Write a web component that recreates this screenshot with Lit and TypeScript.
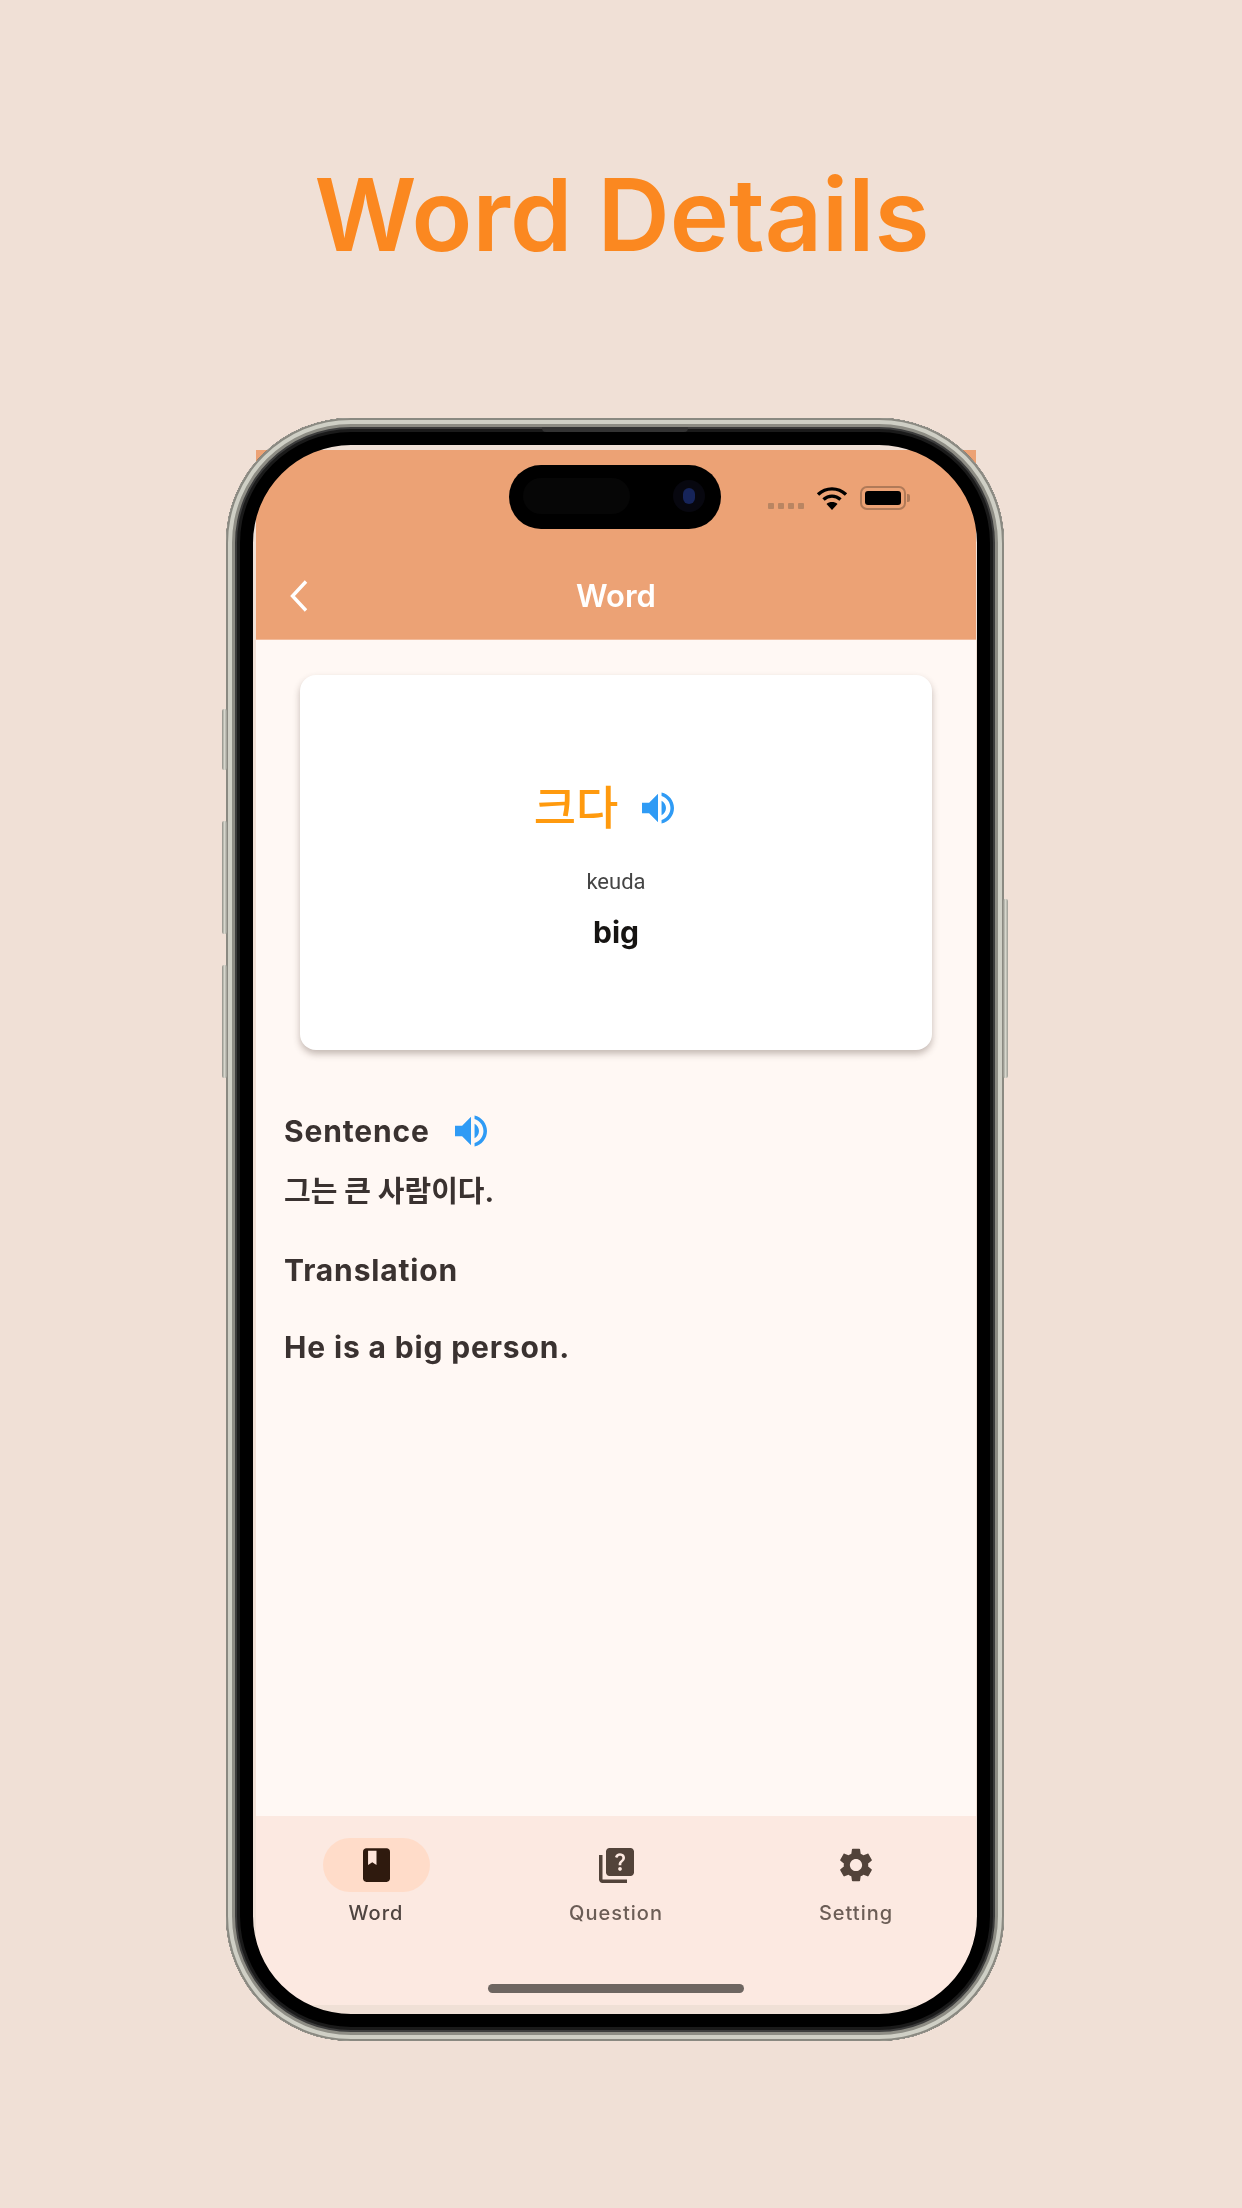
import { LitElement, html, css, svg } from 'lit';
import { customElement, property } from 'lit/decorators.js';

const speaker = svg`<path d="M3 9v6h4l5 5V4L7 9H3zm13.5 3c0-1.77-1.02-3.29-2.5-4.03v8.05c1.48-.73 2.5-2.25 2.5-4.02zM14 3.23v2.06c2.89.86 5 3.54 5 6.71s-2.11 5.85-5 6.71v2.06c4.01-.91 7-4.49 7-8.77s-2.99-7.86-7-8.77z"/>`;

const book = svg`<path d="M18 2H6c-1.1 0-2 .9-2 2v16c0 1.1.9 2 2 2h12c1.1 0 2-.9 2-2V4c0-1.1-.9-2-2-2z"/><path d="M7 3.5h5v8.5l-2.5-1.6L7 12z" fill="#ffe6da"/>`;

const quiz = svg`<path d="M4 6H2v14c0 1.1.9 2 2 2h14v-2H4V6zm16-4H8c-1.1 0-2 .9-2 2v12c0 1.1.9 2 2 2h12c1.1 0 2-.9 2-2V4c0-1.1-.9-2-2-2zm-5.99 13c-.59 0-1.05-.47-1.05-1.05 0-.59.47-1.04 1.05-1.04.59 0 1.04.45 1.04 1.04-.01.58-.45 1.05-1.04 1.05zm2.5-6.17c-.63.93-1.23 1.21-1.56 1.81-.13.24-.18.4-.18 1.18h-1.52c0-.41-.06-1.08.26-1.65.41-.73 1.18-1.16 1.63-1.8.48-.68.21-1.94-1.14-1.94-.88 0-1.32.67-1.5 1.23l-1.37-.57C11.51 5.96 12.52 5 13.99 5c1.23 0 2.08.56 2.51 1.26.37.61.58 1.73.01 2.57z"/>`;

const gear = svg`<path d="M19.14 12.94c.04-.3.06-.61.06-.94 0-.32-.02-.64-.07-.94l2.03-1.58c.18-.14.23-.41.12-.61l-1.92-3.32c-.12-.22-.37-.29-.59-.22l-2.39.96c-.5-.38-1.03-.7-1.62-.94l-.36-2.54c-.04-.24-.24-.41-.48-.41h-3.84c-.24 0-.43.17-.47.41l-.36 2.54c-.59.24-1.13.57-1.62.94l-2.39-.96c-.22-.08-.47 0-.59.22L2.74 8.87c-.12.21-.08.47.12.61l2.03 1.58c-.05.3-.09.63-.09.94s.02.64.07.94l-2.03 1.58c-.18.14-.23.41-.12.61l1.92 3.32c.12.22.37.29.59.22l2.39-.96c.5.38 1.03.7 1.62.94l.36 2.54c.05.24.24.41.48.41h3.84c.24 0 .44-.17.47-.41l.36-2.54c.59-.24 1.13-.56 1.62-.94l2.39.96c.22.08.47 0 .59-.22l1.92-3.32c.12-.22.07-.47-.12-.61l-2.01-1.58zM12 15.6c-1.98 0-3.6-1.62-3.6-3.6s1.62-3.6 3.6-3.6 3.6 1.62 3.6 3.6-1.62 3.6-3.6 3.6z"/>`;

@customElement('nav-tab')
export class NavTab extends LitElement {
  @property({ type: String }) label: string = '';
  @property({ type: Boolean }) active: boolean = false;

  static get styles() {
    return css`
      :host {
        display: flex;
        flex-direction: column;
        align-items: center;
      }

      .pill {
        display: flex;
        align-items: center;
        justify-content: center;
        width: 107px;
        height: 54px;
        border-radius: 27px;
        color: #52433a;
      }

      :host([active]) .pill {
        background: #ffdcc9;
        color: #2f1a0e;
      }

      .label {
        margin-top: 7px;
        font: 500 20px/28px Inter, sans-serif;
        letter-spacing: 1px;
        color: #6b5d56;
      }

      :host([active]) .label {
        color: #4f4440;
      }
    `;
  }

  render() {
    return html`
      <div class="pill"><slot></slot></div>
      <div class="label">${this.label}</div>
    `;
  }
}

@customElement('app-root')
export class AppRoot extends LitElement {
  static get styles() {
    return css`
      :host {
        display: block;
        width: 1242px;
        height: 2208px;
        overflow: hidden;
        background: #f0e0d6;
        font-family: Inter, 'Noto Sans CJK KR', sans-serif;
      }

      h1 {
        margin: 0;
        padding: 165px 0 0 2px;
        text-align: center;
        font: 600 100px/100px Inter, sans-serif;
        color: #fb8820;
      }

      .phone {
        position: relative;
        box-sizing: border-box;
        width: 778px;
        height: 1623px;
        margin: 153px 0 0 226px;
        padding: 32px 28px 36px 30px;
      }

      /* frame sits over the screen, the top corners of the header poke out of it */
      .bezel {
        position: absolute;
        inset: 0;
        border-radius: 125px;
        pointer-events: none;
        box-shadow:
          inset 0 0 0 2px #8a8981,
          inset 0 0 0 6px #cfcfc5,
          inset 0 0 0 9px #8d8c84,
          inset 0 0 0 11px #3c3c3c,
          inset 0 0 0 14px #1a1a1a,
          inset 0 0 0 27px #000;
      }

      .btn {
        position: absolute;
        width: 5px;
        border-radius: 2px;
        background: linear-gradient(90deg, #8f8e86, #d6d6cc 50%, #9b9a92);
      }

      .slit {
        position: absolute;
        left: 316px;
        top: 9px;
        width: 146px;
        height: 5px;
        border-radius: 0 0 4px 4px;
        background: #333;
      }

      .island {
        position: absolute;
        left: 283px;
        top: 47px;
        width: 212px;
        height: 64px;
        border-radius: 32px;
        background: #000;
      }

      .island .sensor {
        position: absolute;
        left: 14px;
        top: 13px;
        width: 107px;
        height: 36px;
        border-radius: 18px;
        background: #060606;
      }

      .island .lens {
        position: absolute;
        left: 164px;
        top: 15px;
        width: 32px;
        height: 32px;
        border-radius: 50%;
        background: #07070f;
      }

      .island .lens::after {
        content: '';
        position: absolute;
        left: 10px;
        top: 8px;
        width: 12px;
        height: 16px;
        border-radius: 6px;
        background: #16245a;
      }

      .screen {
        display: flex;
        flex-direction: column;
        height: 1555px;
        background: #fff8f4;
        border-radius: 0 0 40px 40px;
        overflow: hidden;
        filter: blur(0.6px);
      }

      .appbar {
        box-sizing: border-box;
        height: 190px;
        background: #eca275;
        border-bottom: 1px solid #f2bb9b;
      }

      .status {
        display: flex;
        align-items: center;
        justify-content: flex-end;
        height: 24px;
        padding: 36px 70px 0 0;
        gap: 12px;
      }

      .dots {
        display: flex;
        gap: 4px;
        margin: 16px 0 0 0;
      }

      .dots i {
        width: 6px;
        height: 6px;
        border-radius: 1px;
        background: #b98562;
      }

      .battery {
        position: relative;
        box-sizing: border-box;
        width: 46px;
        height: 24px;
        margin-left: 0;
        padding: 3px;
        border: 2px solid #b07a58;
        border-radius: 7px;
      }

      .battery::before {
        content: '';
        display: block;
        height: 100%;
        border-radius: 3px;
        background: #000;
      }

      .battery::after {
        content: '';
        position: absolute;
        right: -6px;
        top: 6px;
        width: 3px;
        height: 8px;
        border-radius: 0 2px 2px 0;
        background: #b07a58;
      }

      .bar {
        display: grid;
        grid-template-columns: 80px 1fr 80px;
        align-items: center;
        height: 48px;
        margin-top: 62px;
      }

      .back {
        display: block;
        margin-left: 34px;
      }

      .bar h2 {
        margin: 0;
        text-align: center;
        font: 600 31px/48px Inter, sans-serif;
        color: #fff;
      }

      .main {
        flex: 1;
        padding: 35px 44px 0;
      }

      .card {
        box-sizing: border-box;
        display: flex;
        flex-direction: column;
        align-items: center;
        height: 375px;
        padding-top: 99px;
        background: #fff;
        border-radius: 16px;
        box-shadow: 0 4px 7px rgba(60, 40, 30, 0.3);
      }

      .word {
        display: flex;
        align-items: center;
        gap: 24px;
        margin-right: 24px;
      }

      .word span {
        font: 500 46px/60px 'Noto Sans CJK KR', sans-serif;
        color: #ff9a0e;
      }

      .word .sound {
        margin-top: 8px;
      }

      .sound {
        display: block;
        fill: #2f9bf5;
      }

      .roman {
        margin-top: 36px;
        font: 400 22px/24px Roboto, sans-serif;
        color: #444;
      }

      .meaning {
        margin-top: 18px;
        font: 700 30px/40px Inter, sans-serif;
        color: #161412;
      }

      .details {
        margin: 61px 0 0 -16px;
        color: #3a3230;
        font: 700 30px/40px Inter, 'Noto Sans CJK KR', sans-serif;
        letter-spacing: 0.85px;
      }

      .details p {
        margin: 0;
      }

      .row {
        display: flex;
        align-items: center;
        gap: 25px;
      }

      .korean {
        margin-top: 21px !important;
        font-size: 29px !important;
        letter-spacing: 0;
      }

      .spaced {
        margin-top: 38px !important;
      }

      .spaced2 {
        margin-top: 37px !important;
      }

      .tabs {
        position: relative;
        display: grid;
        grid-template-columns: repeat(3, 1fr);
        box-sizing: border-box;
        height: 189px;
        padding-top: 22px;
        background: #fce9e1;
      }

      .tabs svg {
        display: block;
        fill: currentColor;
      }

      .home {
        position: absolute;
        left: 232px;
        bottom: 12px;
        width: 256px;
        height: 9px;
        border-radius: 5px;
        background: #6e6661;
      }
    `;
  }

  render() {
    return html`
      <h1>Word Details</h1>
      <div class="phone">
        <div class="screen">
          <div class="appbar">
            <div class="status">
              <div class="dots"><i></i><i></i><i></i><i></i></div>
              <svg width="32" height="24" viewBox="0 0 32 24">
                <path d="M2 8.5C10 1 22 1 30 8.5" fill="none" stroke="#000" stroke-width="3.4"/>
                <path d="M7.5 13.5C12.5 9 19.5 9 24.5 13.5" fill="none" stroke="#000" stroke-width="3.4"/>
                <path d="M16 24l-5.5-6c3-2.6 8-2.6 11 0z" fill="#000"/>
              </svg>
              <div class="battery"></div>
            </div>
            <div class="bar">
              <svg class="back" width="18" height="32" viewBox="0 0 18 32">
                <path d="M16 1.5L2.5 16L16 30.5" fill="none" stroke="#fff" stroke-width="3.4"/>
              </svg>
              <h2>Word</h2>
            </div>
          </div>
          <div class="main">
            <div class="card">
              <div class="word">
                <span>크다</span>
                <svg class="sound" width="32" height="32" viewBox="3 3 18 18">${speaker}</svg>
              </div>
              <div class="roman">keuda</div>
              <div class="meaning">big</div>
            </div>
            <div class="details">
              <div class="row">
                <p>Sentence</p>
                <svg class="sound" width="32" height="32" viewBox="3 3 18 18">${speaker}</svg>
              </div>
              <p class="korean">그는 큰 사람이다.</p>
              <p class="spaced">Translation</p>
              <p class="spaced2">He is a big person.</p>
            </div>
          </div>
          <div class="tabs">
            <nav-tab label="Word" active>
              <svg width="27" height="34" viewBox="4 2 16 20">${book}</svg>
            </nav-tab>
            <nav-tab label="Question">
              <svg width="35" height="35" viewBox="2 2 20 20">${quiz}</svg>
            </nav-tab>
            <nav-tab label="Setting">
              <svg width="34" height="34" viewBox="2 2 20 20">${gear}</svg>
            </nav-tab>
            <div class="home"></div>
          </div>
        </div>
        <div class="island">
          <div class="sensor"></div>
          <div class="lens"></div>
        </div>
        <div class="bezel"></div>
        <div class="slit"></div>
        <div class="btn" style="left:-4px;top:291px;height:61px"></div>
        <div class="btn" style="left:-4px;top:403px;height:113px"></div>
        <div class="btn" style="left:-4px;top:547px;height:113px"></div>
        <div class="btn" style="right:-4px;top:481px;height:179px"></div>
      </div>
    `;
  }
}
